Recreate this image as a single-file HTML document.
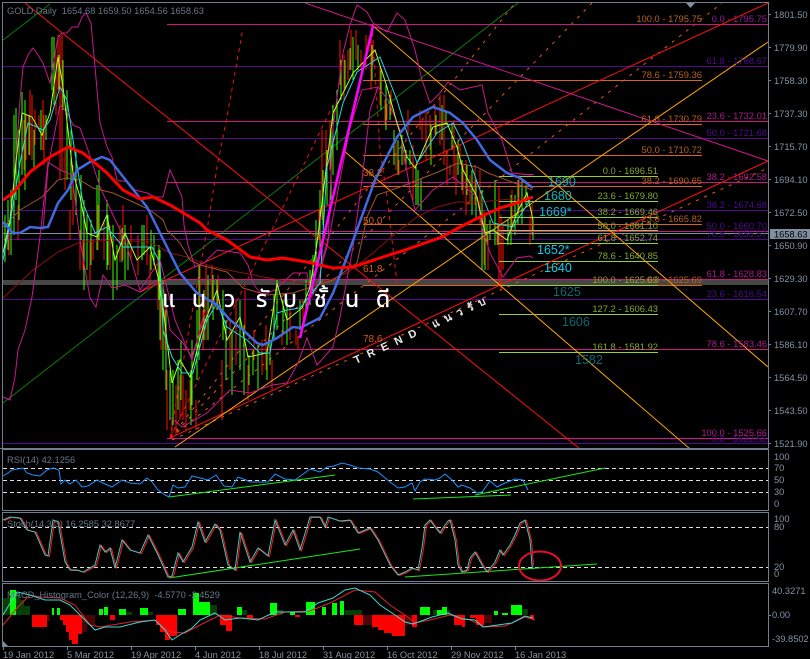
<!DOCTYPE html>
<html><head><meta charset="utf-8"><title>GOLD Daily</title>
<style>
html,body{margin:0;padding:0;background:#000;width:810px;height:659px;overflow:hidden}
svg{display:block;font-family:"Liberation Sans",Arial,"Noto Sans CJK JP",sans-serif}
.ax{fill:#8494a4;font-size:9.3px}
.t{fill:#66778a;font-size:9.3px}
.o{fill:#b8621e;font-size:9.4px;text-anchor:end}
.g{fill:#84a82c;font-size:9.4px;text-anchor:end}
.p{fill:#b0188c;font-size:9.4px;text-anchor:end}
.v{fill:#4c0c90;font-size:9.4px;text-anchor:end}
.lo{fill:#d85a14;font-size:10px}
.c{fill:#18c0d0;font-size:12.5px}
.d{fill:#0f6a72;font-size:12.5px}
polyline,line,path.l{fill:none}
</style></head><body>
<svg width="810" height="659" viewBox="0 0 810 659" xmlns="http://www.w3.org/2000/svg">
<rect width="810" height="659" fill="#000"/>
<!-- grey band -->
<rect x="2" y="280" width="766" height="5" fill="#464646"/>
<!-- horizontal purple -->
<g stroke="#55088f" stroke-width="1" shape-rendering="crispEdges">
<line x1="2" x2="768" y1="66.5" y2="66.5"/><line x1="2" x2="768" y1="138.5" y2="138.5"/><line x1="2" x2="768" y1="210.5" y2="210.5"/><line x1="2" x2="768" y1="239.5" y2="239.5"/><line x1="2" x2="768" y1="299.5" y2="299.5"/><line x1="2" x2="768" y1="443.5" y2="443.5"/>
</g>
<!-- green thin -->
<g stroke="#0c7a0c" stroke-width="1"><line x1="3" y1="40" x2="50" y2="4"/><line x1="3" y1="403" x2="518" y2="3"/></g>
<!-- dashed fans -->
<g stroke="#e8581a" stroke-width="1" stroke-dasharray="3 6" fill="none">
<line x1="170" y1="438" x2="515" y2="3"/><line x1="170" y1="438" x2="592" y2="3"/><line x1="170" y1="438" x2="722" y2="3"/><line x1="172" y1="440" x2="768" y2="168"/>
</g>
<g stroke="#f01010" stroke-width="1" stroke-dasharray="4 4" fill="none">
<polyline points="170,438 187,340 207,230 217,167 227,117 243,28"/><line x1="170" y1="438" x2="333" y2="105"/>
<polyline points="372,25 380,150 387,197 397,283"/>
</g>
<!-- bars -->
<path class="l" shape-rendering="crispEdges" stroke="#ff1000" stroke-width="1" d="M9 230V255M18 205V240M24 120V170M26 115V160M30 90V155M32 95V160M35 110V145M39 115V130M43 100V150M44 115V165M56 55V115M58 35V90M60 35V180M62 35V170M65 150V190M70 210V240M73 165V225M80 230V270M83 240V270M90 240V280M93 240V260M98 205V250M104 220V260M110 225V270M120 225V262M123 205V260M131 225V260M138 235V275M147 215V265M150 255V285M158 250V310M161 290V350M165 300V350M167 370V430M172 420V438M176 385V435M180 375V420M183 375V420M186 390V430M190 380V410M196 400V430M200 265V340M203 310V350M206 265V340M212 265V300M218 275V310M222 360V420M230 320V370M236 300V365M245 290V330M248 365V400M254 330V360M262 340V375M266 325V370M272 360V390M282 330V345M290 305V340M296 330V345M298 338V350M303 300V320M319 210V240M322 130V220M326 130V180M330 120V170M340 40V85M344 55V100M348 50V80M351 30V70M356 30V60M361 50V70M366 35V70M371 30V90M373 40V65M380 65V105M385 100V125M387 105V120M391 90V115M396 140V170M399 160V175M404 150V165M408 110V135M413 145V200M420 110V130M422 120V140M426 110V160M430 115V150M435 105V135M440 95V145M444 95V165M447 150V185M450 165V175M454 120V180M456 155V195M460 145V165M463 165V195M466 160V215M470 175V205M475 165V205M480 170V225M484 210V265M488 235V270M497 230V245M499 187V285M501 215V290M503 225V270M512 190V230M519 175V210M530 215V245M532 205V235"/>
<path class="l" shape-rendering="crispEdges" stroke="#33ff00" stroke-width="1" d="M5 215V262M8 200V250M11 190V255M14 115V235M16 108V200M19 130V220M22 92V175M25 100V190M29 115V155M34 130V170M41 110V150M46 115V140M52 37V90M54 37V105M59 55V90M63 60V110M67 90V180M71 130V200M76 150V215M81 175V240M84 200V290M87 215V270M91 220V265M97 185V250M99 170V240M107 200V270M108 215V265M113 225V300M117 245V290M122 228V262M125 225V280M128 240V270M142 225V260M144 225V255M151 230V270M154 235V265M159 245V300M160 250V340M163 280V370M166 310V390M170 370V420M173 370V425M178 360V410M181 340V400M191 370V425M192 340V405M197 310V380M199 265V360M204 290V340M208 275V340M213 275V320M217 280V310M223 290V340M226 320V380M232 330V395M240 300V370M244 325V395M249 355V385M253 350V375M258 345V390M267 350V380M270 340V365M274 295V340M277 280V330M283 300V335M287 300V345M300 300V330M306 280V310M310 270V305M313 255V295M316 220V270M320 190V250M323 170V225M327 150V205M331 130V200M333 105V175M337 90V150M341 60V100M345 60V90M350 48V70M353 37V80M358 45V70M372 45V80M381 70V110M386 85V130M390 95V120M394 130V165M398 140V175M402 135V165M406 150V170M410 150V165M416 165V205M418 170V205M421 180V210M431 125V165M436 115V135M442 105V140M446 110V125M452 125V150M458 140V175M462 160V190M467 165V195M472 170V215M476 180V220M482 190V270M485 215V270M487 225V245M490 220V240M495 180V245M498 225V245M508 220V245M511 195V245M515 195V235M518 180V225M522 180V225M526 185V205M533 220V240"/>
<!-- horizontal pink -->
<g stroke="#c8187f" stroke-width="1" shape-rendering="crispEdges">
<line x1="167" x2="768" y1="24.5" y2="24.5"/><line x1="167" x2="768" y1="121.5" y2="121.5"/><line x1="167" x2="768" y1="182.5" y2="182.5"/><line x1="167" x2="768" y1="231.5" y2="231.5"/><line x1="167" x2="768" y1="279.5" y2="279.5"/><line x1="167" x2="768" y1="349.5" y2="349.5"/><line x1="167" x2="768" y1="438.5" y2="438.5" stroke="#e0109a"/>
</g>
<!-- current price -->
<line x1="2" x2="768" y1="233.5" y2="233.5" stroke="#8090a0" shape-rendering="crispEdges"/>
<!-- orange horizontals -->
<g stroke="#d9651c" stroke-width="1" shape-rendering="crispEdges">
<line x1="363" x2="702" y1="80.5" y2="80.5"/><line x1="363" x2="702" y1="124.5" y2="124.5"/><line x1="363" x2="702" y1="155.5" y2="155.5"/><line x1="363" x2="702" y1="186.5" y2="186.5"/><line x1="363" x2="702" y1="224.5" y2="224.5"/><line x1="363" x2="702" y1="285.5" y2="285.5"/>
</g>
<!-- yellowgreen horizontals -->
<g stroke="#9acd32" stroke-width="1" shape-rendering="crispEdges">
<line x1="499" x2="658" y1="176.5" y2="176.5"/><line x1="499" x2="658" y1="201.5" y2="201.5"/><line x1="499" x2="658" y1="217.5" y2="217.5"/><line x1="499" x2="658" y1="230.5" y2="230.5"/><line x1="499" x2="658" y1="243.5" y2="243.5"/><line x1="499" x2="658" y1="261.5" y2="261.5"/><line x1="499" x2="658" y1="285.5" y2="285.5"/><line x1="499" x2="658" y1="314.5" y2="314.5"/><line x1="499" x2="658" y1="352.5" y2="352.5"/>
</g>
<!-- diagonal lines -->
<g stroke="#ff1010" stroke-width="1"><line x1="170" y1="438" x2="768" y2="161"/><line x1="140" y1="292" x2="768" y2="3"/><line x1="25" y1="3" x2="580" y2="449"/></g>
<g stroke="#ffa500" stroke-width="1"><line x1="175" y1="447" x2="768" y2="42"/><line x1="372" y1="25" x2="768" y2="367"/><line x1="343" y1="150" x2="690" y2="449"/></g>
<line x1="305" y1="3" x2="768" y2="161" stroke="#d0188c"/>
<!-- MAs -->
<polyline stroke="#8b1010" points="3,298 33,270 58,252 80,242 117,240 150,242 170,253 187,257 213,267 243,273 280,280 317,285 347,273 373,253 397,232 417,217 437,207 457,202 480,202 500,200 533,197"/>
<polyline stroke="#a0522d" points="3,227 20,210 42,197 58,180 67,178 80,180 93,188 113,193 133,202 150,210 163,220 167,230 180,243 190,260 200,265 227,272 243,288 267,295 293,293 333,280 357,263 367,217 377,195 400,187 438,172 458,163 477,167 488,173 512,182 532,190"/>
<g stroke="#c8188a" stroke-width="1" fill="none">
<polyline points="8,240 15,170 20,100 23,67 28,55 33,48 38,55 43,63 50,83 54,60 58,37 62,33 67,33 72,27 78,27 82,17 86,13 91,23 95,67 100,123 107,147 112,157 117,180 128,182 135,190 147,193 155,197 163,197 170,170 176,183 182,197 184,225 188,245 195,267 205,262 217,250 240,253 248,265 254,285 262,295 275,290 293,273 307,273 311,297 316,290 322,265 328,243 333,127 343,53 350,25 357,5 367,12 373,23 387,32 397,13 405,20 415,50 422,80 430,103 440,93 448,82 460,90 482,85 488,113 502,140 512,173 532,175"/>
<polyline points="3,397 10,400 15,377 18,350 25,330 32,297 40,237 48,162 60,170 72,175 80,240 90,298 96,307 103,275 112,288 125,285 140,292 157,280 163,285 170,330 183,343 192,357 200,330 215,300"/>
<polyline points="170,417 182,427 207,413 230,390 250,393 272,385 287,383 298,363 307,338 317,365 333,347 340,317 353,247 362,180 370,110 378,87 388,100 400,130 410,190 415,210 433,190 453,177 477,197 482,227 490,253 503,277 517,258 530,256 533,258"/>
<polyline points="43,230 48,167 60,105 67,112 73,125 80,128 88,150 100,187 112,213 125,240 140,290 160,260 175,320 192,360 205,310"/>
<polyline points="320,267 330,233 350,127 362,90 378,87"/>
</g>
<polyline stroke="#adff2f" points="3,253 10,220 17,153 22,113 32,117 42,135 50,113 58,57 63,87 70,147 73,173 80,197 87,233 97,237 107,215 115,260 125,233 137,260 150,247 158,277 163,307 172,383 180,360 190,377 203,327 217,290 227,340 240,317 248,357 267,353 277,283 287,320 302,308 310,287 317,243 333,113 353,73 375,50 387,87 397,123 407,157 415,168 433,127 447,123 457,147 463,170 477,197 485,233 493,230 507,240 517,213 527,193 533,220"/>
<polyline stroke="#20d8e0" points="3,260 10,223 20,163 28,123 43,130 50,120 60,87 67,100 75,153 83,203 95,233 107,227 123,247 133,247 152,247 160,263 163,330 172,357 182,373 193,373 207,320 217,303 227,327 247,340 260,353 270,353 277,313 287,310 300,308 320,283 327,167 343,103 357,72 380,57 397,100 407,133 417,163 437,133 453,123 463,143 480,190 493,223 513,227 530,200"/>
<polyline stroke="#4169e1" stroke-width="2.5" points="3,222 13,233 20,233 30,227 40,228 48,227 58,203 68,190 77,170 90,162 102,157 110,160 128,183 147,207 160,233 170,253 180,273 197,293 217,305 230,320 243,330 257,343 263,345 277,338 293,327 300,328 320,318 333,293 347,257 358,227 375,180 397,137 413,117 433,107 450,113 463,123 477,140 490,160 507,173 520,178 533,188"/>
<polyline stroke="#ff0000" stroke-width="3" points="3,200 13,193 30,172 50,157 68,147 83,153 107,173 123,190 140,199 153,197 170,205 200,223 207,230 227,240 250,257 267,260 283,258 307,262 333,268 353,267 383,257 405,250 425,243 442,237 460,227 480,217 500,208 517,203 533,197"/>
<line x1="300" y1="338" x2="373" y2="26" stroke="#ff00ff" stroke-width="2.6"/>
<line x1="522" y1="174.5" x2="534" y2="174.5" stroke="#c8188a"/>
<!-- labels -->
<text x="7" y="14" class="t">GOLD,Daily&#160;&#160;1654.68 1659.50 1654.56 1658.63</text>
<g>
<text x="702" y="22" class="o">100.0 - 1795.75</text><text x="702" y="78" class="o">78.6 - 1759.36</text><text x="702" y="122" class="o">61.8 - 1730.79</text><text x="702" y="153" class="o">50.0 - 1710.72</text><text x="702" y="184" class="o">38.2 - 1690.65</text><text x="702" y="222" class="o">23.6 - 1665.82</text><text x="702" y="283" class="o">0.0 - 1625.69</text>
<text x="767" y="64" class="v">61.8 - 1768.67</text><text x="767" y="136" class="v">50.0 - 1721.68</text><text x="767" y="208" class="v">38.2 - 1674.68</text><text x="767" y="229" class="v">50.0 - 1660.70</text><text x="767" y="237" class="v">78.6 - 1655.57</text><text x="767" y="297" class="v">23.6 - 1616.54</text><text x="767" y="442" class="v">0.0 - 1522.55</text>
<text x="767" y="22" class="p" style="fill:#98189a">0.0 - 1795.75</text><text x="767" y="119" class="p">23.6 - 1732.01</text><text x="767" y="180" class="p">38.2 - 1692.58</text><text x="767" y="277" class="p">61.8 - 1628.83</text><text x="767" y="347" class="p">78.6 - 1583.46</text><text x="767" y="436" class="p">100.0 - 1525.66</text>
<text x="658" y="174" class="g">0.0 - 1696.51</text><text x="658" y="199" class="g">23.6 - 1679.80</text><text x="658" y="215" class="g">38.2 - 1669.46</text><text x="658" y="229" class="g">50.0 - 1661.10</text><text x="658" y="241" class="g">61.8 - 1652.74</text><text x="658" y="259" class="g">78.6 - 1640.85</text><text x="658" y="283" class="g">100.0 - 1625.69</text><text x="658" y="312" class="g">127.2 - 1606.43</text><text x="658" y="350" class="g">161.8 - 1581.92</text>
<text x="363" y="176" class="lo">38.2</text><text x="363" y="224" class="lo">50.0</text><text x="363" y="272" class="lo">61.8</text><text x="363" y="342" class="lo">78.6</text>
<text x="548" y="186" class="c" style="fill:#14a8b0">1690</text><text x="544" y="200" class="c" style="fill:#14b4bc">1680</text><text x="539" y="216" class="c" style="fill:#14b8c0">1669*</text><text x="537" y="254" class="c" style="fill:#10c8e8">1652*</text><text x="544" y="272" class="c" style="fill:#10d0e8">1640</text>
<text x="553" y="296" class="d">1625</text><text x="562" y="326" class="d">1606</text><text x="575" y="364" class="d">1582</text>
</g>
<g fill="#fff" stroke="#fff" stroke-width="0.35" font-size="23" font-family="'Liberation Sans','Noto Sans Thai','Noto Sans CJK SC',sans-serif">
<text x="162" y="307">แ</text><text x="192" y="307">น</text><text x="224" y="307">ว</text><text x="256" y="307">รั</text><text x="283" y="307">บ</text><text x="314" y="307">ชั้</text><text x="345" y="307">น</text><text x="376" y="307">ดี</text>
</g>
<text transform="translate(356 364) rotate(-24.8)" fill="#e8e8e8" font-size="11" font-weight="bold" letter-spacing="7.5">TREND</text>
<text transform="translate(434 328) rotate(-24.8)" fill="#e8e8e8" font-size="11" font-weight="bold" letter-spacing="6">แนวรับ</text>
<!-- right axis main -->
<g class="ax">
<text x="774" y="18" class="ax">1801.50</text><text x="774" y="51" class="ax">1779.90</text><text x="774" y="84" class="ax">1758.30</text><text x="774" y="117" class="ax">1737.30</text><text x="774" y="150" class="ax">1715.70</text><text x="774" y="183" class="ax">1694.10</text><text x="774" y="216" class="ax">1672.50</text><text x="774" y="249" class="ax">1650.90</text><text x="774" y="282" class="ax">1629.30</text><text x="774" y="315" class="ax">1607.70</text><text x="774" y="348" class="ax">1586.10</text><text x="774" y="381" class="ax">1564.50</text><text x="774" y="414" class="ax">1543.50</text><text x="774" y="447" class="ax">1521.90</text>
<text x="774" y="460" class="ax">100</text><text x="774" y="471" class="ax">70</text><text x="774" y="483" class="ax">50</text><text x="774" y="495" class="ax">30</text><text x="774" y="507" class="ax">0</text>
<text x="774" y="522" class="ax">100</text><text x="774" y="530" class="ax">80</text><text x="774" y="570" class="ax">20</text><text x="774" y="577" class="ax">0</text>
<text x="772" y="594" class="ax">40.3271</text><text x="772" y="618" class="ax">0.00</text><text x="772" y="642" class="ax">-39.8502</text>
</g>
<rect x="770" y="229" width="40" height="10" fill="#7f8fa0"/>
<text x="774" y="237.5" font-size="9.3" fill="#000">1658.63</text>
<!-- RSI -->
<g stroke="#e0e0e0" stroke-dasharray="4 3" shape-rendering="crispEdges"><line x1="3" x2="768" y1="468.5" y2="468.5"/><line x1="3" x2="768" y1="480.5" y2="480.5"/><line x1="3" x2="768" y1="492.5" y2="492.5"/><line x1="3" x2="768" y1="527.5" y2="527.5"/><line x1="3" x2="768" y1="567.5" y2="567.5"/></g>
<polyline stroke="#1e90ff" points="3,476 8,473 12,470 23,468 27,473 33,475 40,476 47,470 53,468 59,470 61,484 65,480 70,484 76,480 82,487 88,486 97,480 103,483 112,487 122,480 130,483 140,484 147,478 152,482 158,490 165,495 169,497 173,485 178,488 185,487 192,476 200,478 208,480 216,475 224,486 232,487 238,477 246,480 250,482 258,482 268,482 275,474 285,479 295,480 310,469 320,472 327,467 334,466 342,463 350,465 358,468 370,469 378,472 390,482 398,488 405,487 412,483 415,491 420,482 425,479 435,480 440,478 445,474 452,480 458,487 462,485 470,488 477,493 482,492 490,481 497,487 505,483 515,479 523,480 528,490"/>
<g stroke="#18e818"><line x1="169" y1="497" x2="335" y2="475"/><line x1="413" y1="499" x2="511" y2="495"/><line x1="475" y1="495" x2="605" y2="468"/><line x1="169" y1="578" x2="360" y2="549"/><line x1="405" y1="577" x2="597" y2="564"/></g>
<text x="7" y="463" class="t">RSI(14) 42.1256</text>
<!-- Stoch -->
<polyline stroke="#ff1818" transform="translate(1.5 0.5)" points="3,520 10,517 20,518 27,530 35,532 45,555 48,556 53,520 58,522 65,562 70,570 77,570 83,572 95,565 100,545 105,552 110,548 115,568 122,540 130,550 140,553 148,535 158,555 168,577 172,576 178,553 183,562 192,547 198,522 205,542 215,524 220,530 228,565 235,570 240,532 250,562 258,548 268,556 275,520 285,545 293,530 300,550 310,517 320,517 325,527 328,517 340,521 350,520 358,533 370,528 378,540 390,565 398,575 405,572 412,568 418,570 422,548 425,525 430,520 435,527 440,533 445,525 448,521 450,520 455,540 458,565 462,572 467,570 470,558 475,552 482,565 487,572 495,562 500,550 503,555 510,545 515,535 520,523 525,520 530,540 532,565"/>
<polyline stroke="#3cc8c0" points="3,520 10,517 20,518 27,530 35,532 45,555 48,556 53,520 58,522 65,562 70,570 77,570 83,572 95,565 100,545 105,552 110,548 115,568 122,540 130,550 140,553 148,535 158,555 168,577 172,576 178,553 183,562 192,547 198,522 205,542 215,524 220,530 228,565 235,570 240,532 250,562 258,548 268,556 275,520 285,545 293,530 300,550 310,517 320,517 325,527 328,517 340,521 350,520 358,533 370,528 378,540 390,565 398,575 405,572 412,568 418,570 422,548 425,525 430,520 435,527 440,533 445,525 448,521 450,520 455,540 458,565 462,572 467,570 470,558 475,552 482,565 487,572 495,562 500,550 503,555 510,545 515,535 520,523 525,520 530,540 532,565 533,569"/>
<text x="7" y="527" class="t">Stoch(14,3,3) 16.2585 32.8677</text>
<ellipse cx="540" cy="566" rx="21" ry="14.5" fill="none" stroke="#e0102a" stroke-width="2"/>
<!-- MACD -->
<path fill="#00ff00" d="M10 615V590H16V615ZM52 615V608H54V615ZM57 615V608H60V615ZM99 615V609H103V615ZM104 615V607H108V615ZM119 615V609H126V615ZM140 615V608H148V615ZM178 615V609H186V615ZM193 615V593H199V615ZM199 615V602H210V615ZM237 615V607H242V615ZM270 615V603H277V615ZM290 615V612H295V615ZM306 615V602H315V615ZM322 615V607H326V615ZM332 615V603H337V615ZM340 615V601H344V615ZM420 615V607H430V615ZM437 615V610H442V615ZM442 615V607H447V615ZM494 615V611H498V615ZM502 615V613H508V615ZM511 615V605H522V615Z"/>
<path fill="#063f06" d="M2 615V598H10V615ZM16 615V592H20V615ZM20 615V600H24V615ZM24 615V606H30V615ZM126 615V612H132V615ZM148 615V612H153V615ZM210 615V605H217V615ZM242 615V610H247V615ZM277 615V610H283V615ZM345 615V610H362V615ZM433 615V610H437V615ZM447 615V610H450V615ZM522 615V609H528V615Z"/>
<path fill="#ff0000" d="M32 615V627H39V615ZM39 615V627H47V615ZM60 615V620H63V615ZM63 615V625H66V615ZM66 615V632H69V615ZM69 615V640H72V615ZM72 615V644H78V615ZM78 615V634H82V615ZM110 615V620H115V615ZM156 615V625H160V615ZM160 615V632H165V615ZM165 615V640H170V615ZM170 615V636H177V615ZM220 615V625H226V615ZM226 615V631H232V615ZM247 615V618H253V615ZM295 615V617H300V615ZM354 615V625H363V615ZM372 615V627H378V615ZM378 615V630H384V615ZM384 615V633H392V615ZM392 615V636H405V615ZM412 615V627H417V615ZM454 615V625H462V615ZM462 615V627H465V615ZM470 615V618H476V615ZM476 615V625H484V615ZM530 615V619H534V615Z"/>
<path fill="#4a0606" d="M47 615V621H50V615ZM82 615V632H87V615ZM87 615V625H95V615ZM363 615V625H372V615ZM405 615V625H412V615ZM484 615V623H492V615Z"/>
<polyline stroke="#e02030" points="3,625 17,608 30,595 40,597 60,598 75,605 90,625 100,627 130,622 155,620 170,632 185,633 200,625 220,615 240,618 265,619 285,612 310,611 330,603 355,590 375,592 390,605 405,615 415,623 430,620 450,615 470,620 485,627 505,626 525,617 535,620"/>
<polyline stroke="#40d8d0" points="3,615 17,592 30,595 45,600 60,600 70,605 85,620 95,630 105,627 120,627 140,622 155,620 165,630 172,640 180,635 192,628 200,620 215,613 225,620 240,618 258,620 275,612 290,612 305,612 318,603 333,598 345,590 355,588 370,595 380,605 395,615 405,622 413,624 432,617 448,613 462,619 475,620 483,627 498,625 512,623 525,616 533,618"/>
<text x="7" y="598" class="t">MACD_Histogram_Color (12,26,9)&#160;&#160;-4.5770 -2.4529</text>
<path fill="#7f8fa0" d="M3 641L8 646H3Z"/>
<path fill="#7f8fa0" d="M686 3H695L690.5 8Z"/>
<!-- frames -->
<g fill="none" stroke="#6f7f8f" stroke-width="1" shape-rendering="crispEdges">
<path d="M2.5 448.5V2.5H768.5V448.5M0 448.5H768.5"/>
<rect x="2.5" y="449.5" width="766" height="61"/>
<rect x="2.5" y="512.5" width="766" height="69"/>
<rect x="2.5" y="583.5" width="766" height="63"/>
<path d="M3.5 646V650M67.5 646V650M131.5 646V650M195.5 646V650M259.5 646V650M323.5 646V650M387.5 646V650M451.5 646V650M515.5 646V650M768 14.5H771M768 47.5H771M768 80.5H771M768 113.5H771M768 146.5H771M768 179.5H771M768 212.5H771M768 245.5H771M768 278.5H771M768 311.5H771M768 344.5H771M768 377.5H771M768 410.5H771M768 443.5H771M768 615.5H771"/>
</g>
<!-- dates -->
<g class="ax"><text x="3" y="658" class="ax">19 Jan 2012</text><text x="67" y="658" class="ax">5 Mar 2012</text><text x="131" y="658" class="ax">19 Apr 2012</text><text x="195" y="658" class="ax">4 Jun 2012</text><text x="259" y="658" class="ax">18 Jul 2012</text><text x="323" y="658" class="ax">31 Aug 2012</text><text x="387" y="658" class="ax">16 Oct 2012</text><text x="451" y="658" class="ax">29 Nov 2012</text><text x="515" y="658" class="ax">16 Jan 2013</text></g>
</svg>
</body></html>
